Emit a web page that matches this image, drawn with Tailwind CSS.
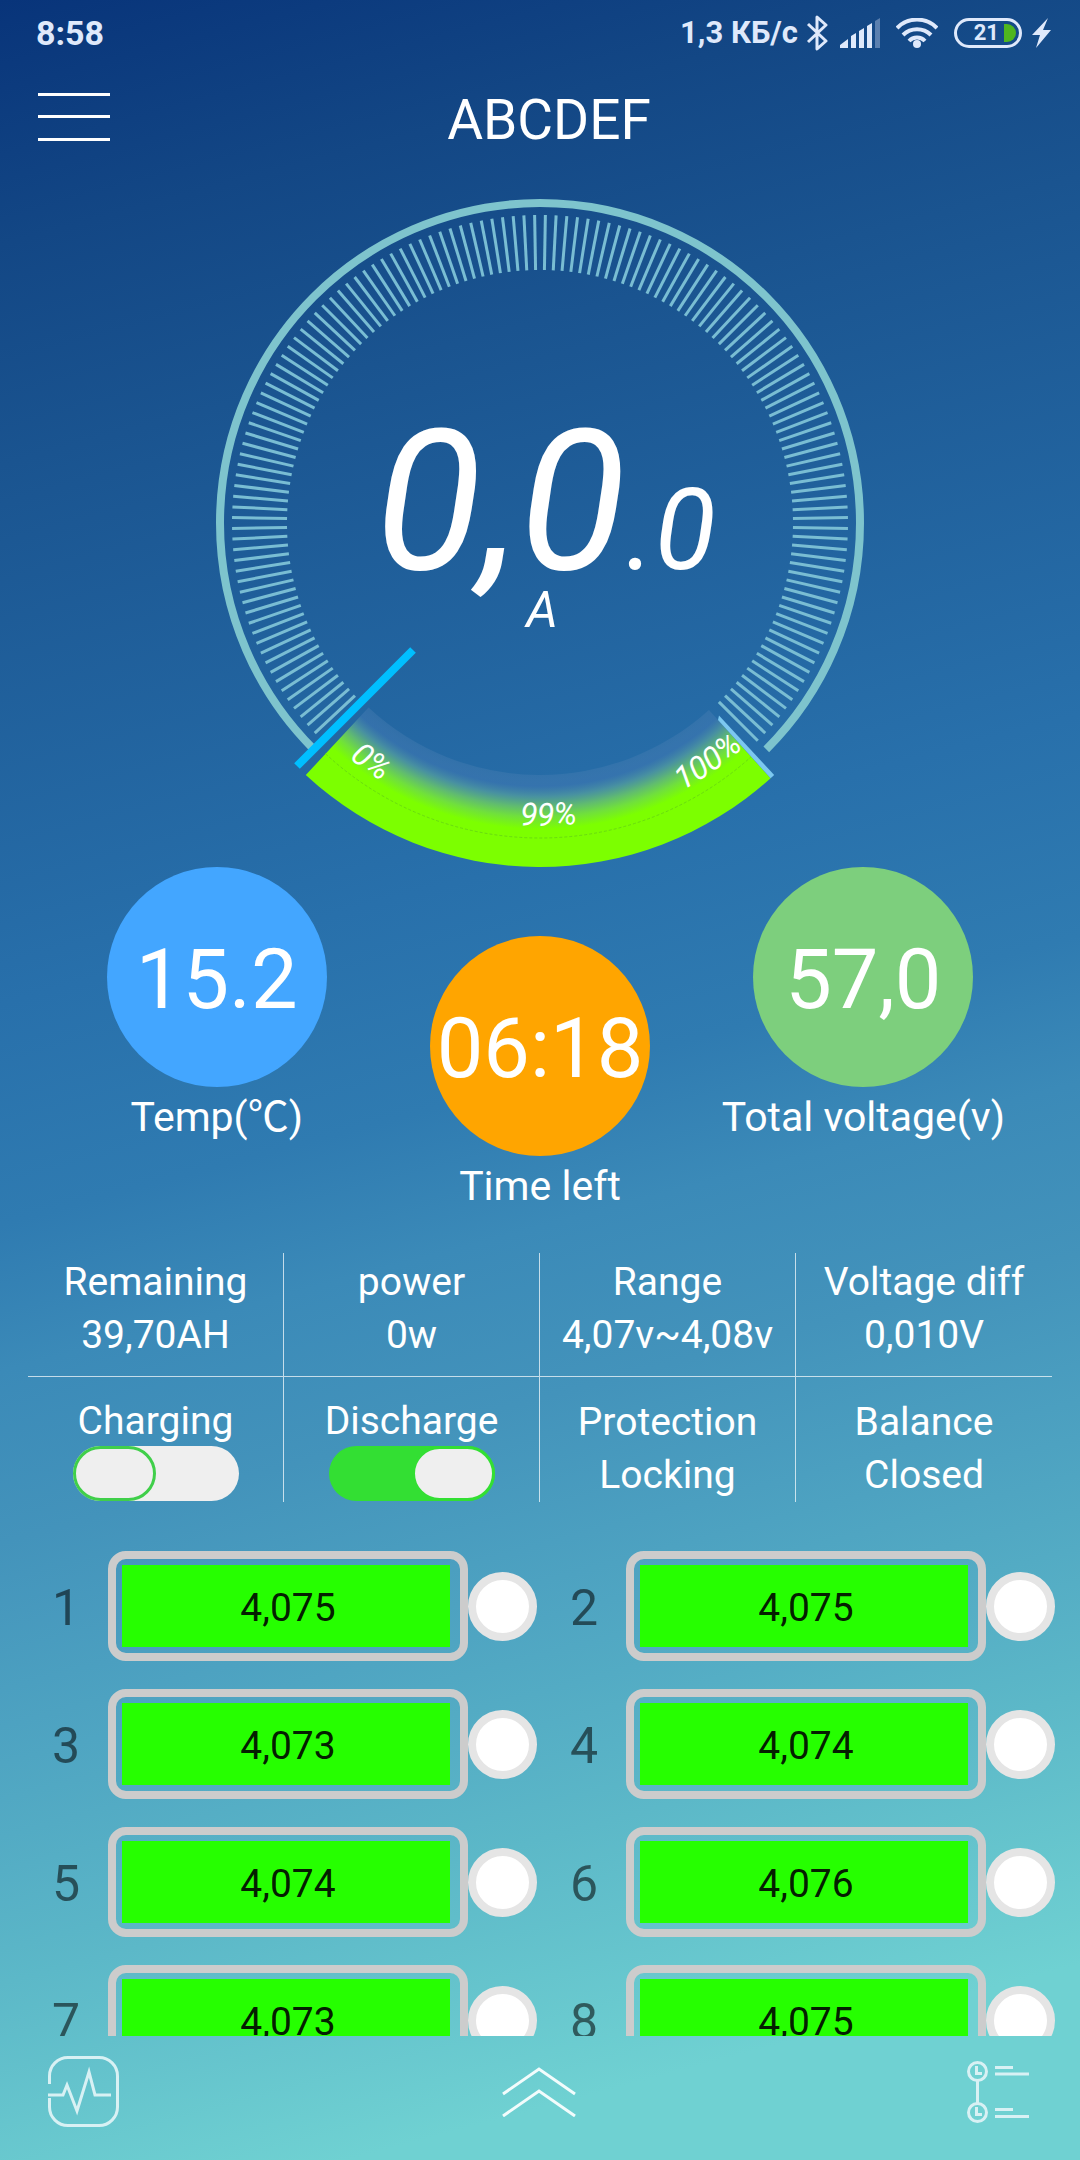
<!DOCTYPE html>
<html lang="en">
<head>
    <meta charset="UTF-8">
    <meta name="viewport" content="width=device-width, initial-scale=1.0">
    <title>ABCDEF</title>
    <script src="https://cdn.jsdelivr.net/npm/@tailwindcss/browser@4"></script>
</head>
<body class="h-screen flex flex-col overflow-hidden font-[Roboto,'Noto_Sans_CJK_SC',sans-serif] text-white bg-[linear-gradient(165deg,#08347a_0%,#134785_10%,#1a5490_19%,#2870ab_41%,#2f7bb1_50%,#3b8ab8_56%,#4393bb_63%,#4b9fc0_69%,#53abc4_75%,#5cb8c8_81%,#6fd1d2_92%,#6fd1d2_100%)]">
    <!-- status bar -->
    <div class="shrink-0 h-16 pt-0.5 pl-9 pr-[29px] flex items-center justify-between font-bold text-[#dfe9fb]">
        <span class="text-[34px] leading-16">8:58</span>
        <div class="flex items-center">
            <span class="text-[31px] leading-16">1,3 КБ/с</span>
            <svg class="ml-2 w-[22px] h-9" viewBox="0 0 22 36" fill="none" stroke="currentColor" stroke-width="3" stroke-linejoin="round">
                <path d="M2 9l18 17-9 8V2l9 8L2 27"/>
            </svg>
            <svg class="ml-3 w-10 h-[30px]" viewBox="0 0 40 30" fill="currentColor">
                <path d="M0 30v-3l8-6v9zM11 30V18l5-3v15zM19 30V13l5-3v20zM27 30V8l5-3v25z"/>
                <path d="M35 30V3l5-3v30z" opacity=".35"/>
            </svg>
            <svg class="ml-4 w-[42px] h-[30px]" viewBox="0 0 42 30" fill="none" stroke="currentColor" stroke-width="4">
                <path d="M1 10a28 28 0 0 1 40 0M7 17a20 20 0 0 1 28 0M13 23a11 11 0 0 1 16 0"/>
                <circle cx="21" cy="26" r="4" fill="currentColor" stroke="none"/>
            </svg>
            <div class="ml-4 w-[68px] h-[30px] border-3 border-current rounded-full flex items-center justify-end gap-[5px] pr-[3px]">
                <span class="text-[22px] leading-6">21</span>
                <span class="w-3 h-[18px] bg-[#4fb61f] rounded-r-full"></span>
            </div>
            <svg class="ml-2.5 w-[19px] h-[30px]" viewBox="0 0 19 30" fill="currentColor">
                <path d="M16 0L0 17h8L4 30 19 12h-8z"/>
            </svg>
        </div>
    </div>

    <!-- header -->
    <header class="shrink-0 h-[106px] pr-[110px] flex items-center">
        <button type="button" aria-label="Menu" class="w-32 pl-[38px]">
            <svg class="w-[72px] h-12" viewBox="0 0 72 48" fill="#fff">
                <path d="M0 0h72v3H0zM0 22h72v3H0zM0 45h72v3H0z"/>
            </svg>
        </button>
        <h1 class="flex-1 pt-1.5 text-center text-[55px] leading-16">ABCDEF</h1>
    </header>

    <!-- gauge -->
    <svg class="shrink-0 block mx-auto w-[700px] max-w-full" viewBox="0 0 700 697" fill="none">
        <defs>
            <radialGradient id="charge" gradientUnits="userSpaceOnUse" cx="350" cy="353" r="344">
                <stop offset=".733" stop-color="#4c80b4" stop-opacity=".35"/>
                <stop offset=".765" stop-color="#3f78b2" stop-opacity=".6"/>
                <stop offset=".795" stop-color="#4c95a0" stop-opacity=".9"/>
                <stop offset=".826" stop-color="#60bb70"/>
                <stop offset=".855" stop-color="#70e03c"/>
                <stop offset=".89" stop-color="#7cff00"/>
            </radialGradient>
            <path id="arc" d="M144 575A303 303 0 0 0 556 575"/>
        </defs>
        <path d="M123.700 579.300A320 320 0 1 1 576.300 579.300" stroke="#7ec4cd" stroke-width="8"/>
        <g id="ticks" stroke="#79bdd3" stroke-width="3"></g>
        <path d="M115.800 605A344 344 0 0 0 580.600 608.200L518.900 539.900A252 252 0 0 1 178.500 537.600Z" fill="url(#charge)"/>
        <path d="M135.600 583.800A315 315 0 0 0 561.200 586.700" stroke="#69dc10" stroke-width="1" stroke-dasharray="3 2"/>
        <path d="M580.600 608.200L584.200 605 529 545.600 528 550Z" fill="#7cc8f0"/>
        <path d="M107 596L223 480" stroke="#00bfff" stroke-width="8"/>
        <g fill="#fff" font-style="italic">
            <text x="185" y="399" font-size="196">0,0<tspan font-size="112">.0</tspan></text>
            <text x="352" y="457" font-size="50" text-anchor="middle">A</text>
            <g font-size="32">
                <text><textPath href="#arc" startOffset="20">0%</textPath></text>
                <text text-anchor="middle"><textPath href="#arc" startOffset="235">99%</textPath></text>
                <text text-anchor="end"><textPath href="#arc" startOffset="449">100%</textPath></text>
            </g>
        </g>
    </svg>

    <!-- readings -->
    <section class="shrink-0 px-[55px] grid grid-cols-3 text-center">
        <div class="flex flex-col items-center">
            <div class="size-[220px] pt-[7px] rounded-full bg-[#43a6ff] flex items-center justify-center text-[83px]">15.2</div>
            <div class="mt-1 text-[41px] leading-[53px] whitespace-nowrap">Temp(℃)</div>
        </div>
        <div class="mt-[69px] flex flex-col items-center">
            <div class="size-[220px] pt-[7px] rounded-full bg-[#ffa500] flex items-center justify-center text-[83px]">06:18</div>
            <div class="mt-1 text-[41px] leading-[53px] whitespace-nowrap">Time left</div>
        </div>
        <div class="flex flex-col items-center">
            <div class="size-[220px] pt-[7px] rounded-full bg-[#7dcf7d] flex items-center justify-center text-[83px]">57,0</div>
            <div class="mt-1 text-[41px] leading-[53px] whitespace-nowrap">Total voltage(v)</div>
        </div>
    </section>

    <!-- stats -->
    <section class="shrink-0 mt-10 mx-7 text-center text-[39px] leading-[53px] whitespace-nowrap">
        <div class="grid grid-cols-4 divide-x divide-white/70 border-b border-white/70">
            <div class="pt-[3px] pb-3.5">Remaining<br>39,70AH</div>
            <div class="pt-[3px] pb-3.5">power<br>0w</div>
            <div class="pt-[3px] pb-3.5">Range<br>4,07v~4,08v</div>
            <div class="pt-[3px] pb-3.5">Voltage diff<br>0,010V</div>
        </div>
        <div class="grid grid-cols-4 divide-x divide-white/70">
            <div class="pt-5 flex flex-col items-center">
                <label for="charging" class="leading-[49px]">Charging</label>
                <input type="checkbox" id="charging" class="appearance-none flex w-[166px] h-[55px] rounded-full bg-[#efefef] checked:bg-[#33df33] checked:justify-end before:w-[83px] before:h-full before:rounded-full before:border-3 before:border-[#40cf4a] before:bg-[#efefef] checked:before:border-[#33df33]">
            </div>
            <div class="pt-5 flex flex-col items-center">
                <label for="discharge" class="leading-[49px]">Discharge</label>
                <input type="checkbox" id="discharge" checked class="appearance-none flex w-[166px] h-[55px] rounded-full bg-[#efefef] checked:bg-[#33df33] checked:justify-end before:w-[83px] before:h-full before:rounded-full before:border-3 before:border-[#40cf4a] before:bg-[#efefef] checked:before:border-[#33df33]">
            </div>
            <div class="pt-[19px]">Protection<br>Locking</div>
            <div class="pt-[19px]">Balance<br>Closed</div>
        </div>
    </section>

    <!-- cells -->
    <main id="cells" class="flex-1 min-h-0 mt-[49px] px-[22px] grid grid-cols-2 auto-rows-max gap-y-7 overflow-y-auto [scrollbar-width:none]"></main>

    <!-- bottom bar -->
    <footer class="shrink-0 h-[124px] pl-12 pr-[50px] pb-[13px] flex items-center justify-between">
        <button type="button" aria-label="Monitor">
            <svg class="w-[71px] h-[71px]" viewBox="0 0 71 71" fill="none" stroke="#d8f1f4" stroke-width="3">
                <path d="M1.500 28V20A18.500 18.500 0 0 1 20 1.500H51A18.500 18.500 0 0 1 69.500 20V51A18.500 18.500 0 0 1 51 69.500H20A18.500 18.500 0 0 1 1.500 51V42"/>
                <path d="M0 39h15l4-10 10 26L41 16l6 23h16"/>
            </svg>
        </button>
        <button type="button" aria-label="Expand">
            <svg class="w-[76px] h-[50px]" viewBox="0 0 76 50" fill="none" stroke="#f2fcfc" stroke-width="3">
                <path d="M2 27L38 2l36 25M2 49l36-25 36 25"/>
            </svg>
        </button>
        <button type="button" aria-label="Records" class="w-[71px] flex justify-end">
            <svg class="w-[63px] h-[62px]" viewBox="0 0 63 62" fill="none" stroke="#d8f1f4" stroke-width="3">
                <circle cx="10.500" cy="10.500" r="9"/>
                <circle cx="10.500" cy="51.500" r="9"/>
                <path d="M10.500 20v22M9.500 5v7.500h5.500M9.500 46v7.500h5.500M28 6.500h18M28 13h34M28 48.500h18M28 55.500h34"/>
            </svg>
        </button>
    </footer>

    <script>
        const ticks = document.getElementById('ticks');
        for (let a = 137; a <= 405; a += 2) {
            const line = document.createElementNS('http://www.w3.org/2000/svg', 'line');
            const c = Math.cos(a * Math.PI / 180);
            const s = Math.sin(a * Math.PI / 180);
            line.setAttribute('x1', 350 + 253 * c);
            line.setAttribute('y1', 353 + 253 * s);
            line.setAttribute('x2', 350 + 308 * c);
            line.setAttribute('y2', 353 + 308 * s);
            ticks.appendChild(line);
        }

        const cells = ['4,075', '4,075', '4,073', '4,074', '4,074', '4,076', '4,073', '4,075'];
        document.getElementById('cells').innerHTML = cells.map((v, i) => `
            <div class="flex items-center pr-[3px]">
                <span class="w-[86px] pt-1 pl-0.5 text-center text-[50px] leading-[58px] text-black/55">${i + 1}</span>
                <div class="flex-1 h-[110px] pl-1.5 pr-2.5 py-1.5 border-8 border-[#cccccc] rounded-[18px]">
                    <div class="h-full pl-1 pt-1 bg-[#26ff00] flex items-center justify-center text-[39px] text-black/90">${v}</div>
                </div>
                <span class="size-[69px] rounded-full border-8 border-[#e5e5e5] bg-white"></span>
            </div>`).join('');
    </script>
</body>
</html>
